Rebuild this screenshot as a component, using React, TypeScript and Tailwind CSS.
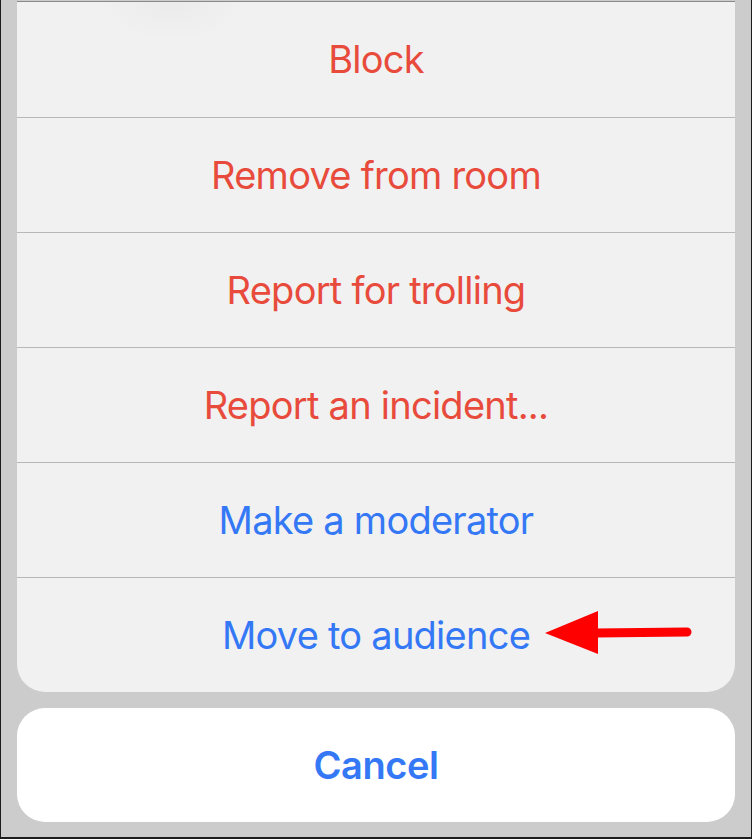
import React from "react";

const actions = [
  { label: "Block", tone: "red" },
  { label: "Remove from room", tone: "red" },
  { label: "Report for trolling", tone: "red" },
  { label: "Report an incident...", tone: "red" },
  { label: "Make a moderator", tone: "blue" },
  { label: "Move to audience", tone: "blue" },
];

const Arrow = () => (
  <svg
    className="absolute left-[540px] top-[606px]"
    width="156"
    height="52"
    viewBox="0 0 156 52"
  >
    <polygon points="4,27 57,5 57,48" fill="#ff0000" />
    <line
      x1="55"
      y1="27"
      x2="146"
      y2="26"
      stroke="#ff0000"
      strokeWidth="9"
      strokeLinecap="round"
    />
  </svg>
);

export default function App() {
  return (
    <div
      className="relative w-[752px] h-[839px] bg-[#cccccc] border-l border-r border-b-2 border-[#1c1c1c] px-4 flex flex-col"
      style={{ fontFamily: "Inter, 'Liberation Sans', sans-serif" }}
    >
      {/* action list */}
      <div className="relative mt-px border-t border-[#8a8a8a] bg-[#f1f1f1] rounded-b-[28px] overflow-hidden">
        <div className="absolute left-[80px] top-0 w-[150px] h-[40px] rounded-b-full bg-[radial-gradient(ellipse_at_top,#e6e6e6_0%,transparent_70%)] opacity-50" />
        {actions.map((a, i) => (
          <div
            key={a.label}
            className={`relative flex items-center justify-center h-[115px] ${i === 0 ? "" : "border-t border-[#b8b8b8]"}`}
          >
            <span
              className={`text-[38px] tracking-[-0.75px] ${a.tone === "red" ? "text-[#e84b3c]" : "text-[#3478f6]"}`}
            >
              {a.label}
            </span>
          </div>
        ))}
      </div>

      {/* cancel */}
      <div className="mt-[16px] h-[114px] bg-white rounded-[28px] flex items-center justify-center">
        <span className="text-[38px] font-semibold text-[#3478f6] tracking-[-0.4px]">
          Cancel
        </span>
      </div>

      <Arrow />
    </div>
  );
}
